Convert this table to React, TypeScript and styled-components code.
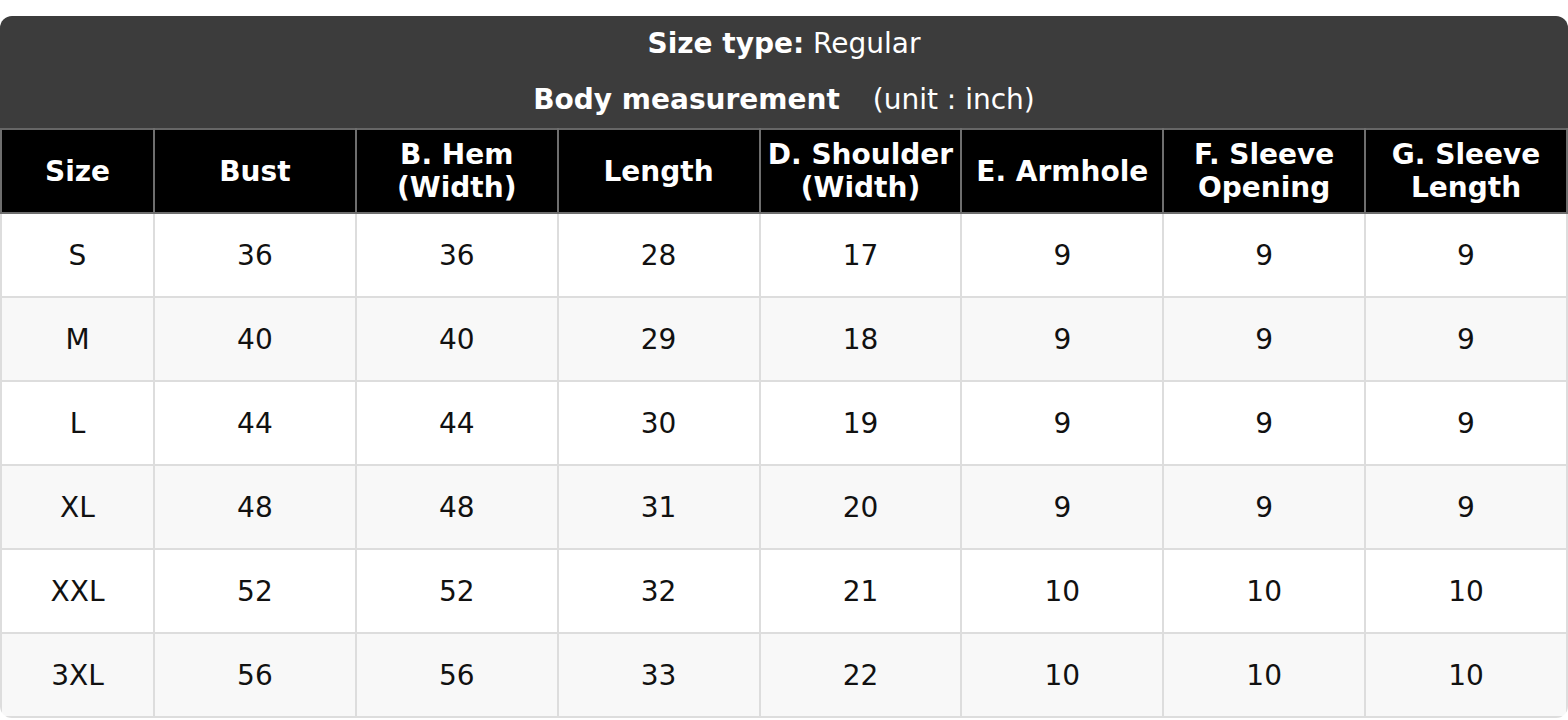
import React from "react";
import styled, { createGlobalStyle } from "styled-components";

const GlobalStyle = createGlobalStyle`
  html, body {
    margin: 0;
    padding: 0;
    background: #ffffff;
    font-family: "DejaVu Sans", "Liberation Sans", sans-serif;
  }
`;

const Page = styled.div`
  padding-top: 16px;
  width: 1568px;
`;

const Card = styled.div`
  border-radius: 12px;
  overflow: hidden;
  background: #ffffff;
`;

const Title = styled.div`
  background: #3c3c3c;
  color: #ffffff;
  height: 112px;
  display: flex;
  flex-direction: column;
  align-items: center;
`;

const TitleLine = styled.div`
  height: 56px;
  line-height: 56px;
  font-size: 28px;
  white-space: pre;
`;

const Strong = styled.b`
  font-weight: bold;
`;

const Unit = styled.span`
  margin-left: 24px;
`;

const Table = styled.table`
  width: 100%;
  border-collapse: collapse;
  table-layout: fixed;
`;

const Head = styled.th`
  background: #000000;
  color: #ffffff;
  border: 2px solid #6e6e6e;
  border-top-color: #666666;
  font-size: 28px;
  font-weight: bold;
  line-height: 33px;
  height: 82px;
  padding: 0 6px;
  text-align: center;
  vertical-align: middle;
`;

const Row = styled.tr<{ $striped: boolean }>`
  background: ${(p) => (p.$striped ? "#f8f8f8" : "#ffffff")};
`;

const Cell = styled.td`
  border: 2px solid #dddddd;
  color: #111111;
  font-size: 28px;
  height: 82px;
  padding: 0;
  text-align: center;
  vertical-align: middle;
`;

const headers = [
  "Size",
  "Bust",
  "B. Hem (Width)",
  "Length",
  "D. Shoulder (Width)",
  "E. Armhole",
  "F. Sleeve Opening",
  "G. Sleeve Length",
];

const rows = [
  ["S", "36", "36", "28", "17", "9", "9", "9"],
  ["M", "40", "40", "29", "18", "9", "9", "9"],
  ["L", "44", "44", "30", "19", "9", "9", "9"],
  ["XL", "48", "48", "31", "20", "9", "9", "9"],
  ["XXL", "52", "52", "32", "21", "10", "10", "10"],
  ["3XL", "56", "56", "33", "22", "10", "10", "10"],
];

export default function App() {
  return (
    <Page>
      <GlobalStyle />
      <Card>
        <Title>
          <TitleLine>
            <Strong>Size type:</Strong> Regular
          </TitleLine>
          <TitleLine>
            <Strong>Body measurement</Strong>
            <Unit> (unit : inch)</Unit>
          </TitleLine>
        </Title>
        <Table>
          <colgroup>
            <col style={{ width: 153 }} />
            {headers.slice(1).map((h) => (
              <col key={h} />
            ))}
          </colgroup>
          <thead>
            <tr>
              {headers.map((h) => (
                <Head key={h}>{h}</Head>
              ))}
            </tr>
          </thead>
          <tbody>
            {rows.map((r, i) => (
              <Row key={r[0]} $striped={i % 2 === 1}>
                {r.map((v, j) => (
                  <Cell key={j}>{v}</Cell>
                ))}
              </Row>
            ))}
          </tbody>
        </Table>
      </Card>
    </Page>
  );
}
